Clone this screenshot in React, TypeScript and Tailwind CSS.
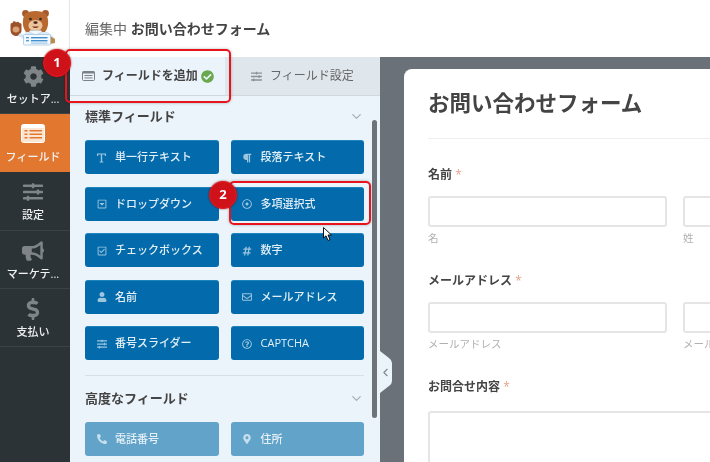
import React from 'react';
import { clsx } from 'clsx';
import {
  FaBullhorn,
  FaCheckCircle,
  FaCog,
  FaDollarSign,
  FaHashtag,
  FaMapMarkerAlt,
  FaParagraph,
  FaPhoneAlt,
  FaRegCaretSquareDown,
  FaRegCheckSquare,
  FaRegDotCircle,
  FaRegEnvelope,
  FaRegQuestionCircle,
  FaSlidersH,
  FaUser,
} from 'react-icons/fa';
import { LuChevronDown, LuChevronLeft } from 'react-icons/lu';

const FONT = { fontFamily: '"Open Sans", "Noto Sans CJK JP", sans-serif' };

function BearLogo() {
  return (
    <svg width="46" height="36" viewBox="0 0 46 36">
      {/* paw */}
      <path d="M0.5 15 Q0.5 12.5 2.5 13 L3 11.5 Q5 10.5 6 12.5 Q8 11 9.5 13 Q12 13 11.5 16 L11.5 21 Q10 26.5 5.5 26 Q0.5 25 0.5 20 Z" fill="#9c5228" />
      <ellipse cx="6" cy="19.5" rx="3.4" ry="3" fill="#dba077" />
      <path d="M10 23 L15 26 L14 29.5 L8 25.5 Z" fill="#d5e6f4" />
      {/* ears */}
      <circle cx="15.5" cy="3.5" r="3.4" fill="#a5592c" />
      <circle cx="35.5" cy="3.5" r="3.4" fill="#a5592c" />
      {/* head */}
      <path d="M15 4 C19 0 32 0 36 4 C39 9 39 17 35 22 L16 22 C12 17 12 9 15 4 Z" fill="#b9682f" />
      <ellipse cx="25.5" cy="15.5" rx="7" ry="5.5" fill="#ecc49b" />
      <circle cx="20.5" cy="9" r="1.3" fill="#2f2a28" />
      <circle cx="30.5" cy="9" r="1.3" fill="#2f2a28" />
      <ellipse cx="25.5" cy="12.6" rx="2.2" ry="1.4" fill="#4a2a1c" />
      <path d="M22 16.5 Q25.5 19.5 29 16.5 Z" fill="#7d2f20" />
      {/* shirt */}
      <path d="M15 22 L38 22 L44 27 L44 33 L39 34 L15 34 Z" fill="#dbeaf7" />
      <path d="M40 26 L45 29 L45 33 L40 34 Z" fill="#c08a4a" />
      <path d="M19 22 L25.5 25 L32 22 L31 20.5 L20 20.5 Z" fill="#f3f8fc" stroke="#a9c3da" strokeWidth="0.5" />
      {/* form */}
      <rect x="13.5" y="24.5" width="27" height="10.5" rx="1" fill="#f4f9fd" stroke="#9cc0de" strokeWidth="0.7" />
      <rect x="16" y="27" width="3" height="1.4" fill="#5b9fd8" />
      <rect x="21" y="27" width="16.5" height="1.4" fill="#3f8fd0" />
      <rect x="16" y="30" width="3" height="1.4" fill="#5b9fd8" />
      <rect x="21" y="30" width="16.5" height="1.4" fill="#3f8fd0" />
      <rect x="21" y="32.6" width="16.5" height="1" fill="#8dbde4" />
    </svg>
  );
}

function FormsIcon() {
  return (
    <svg width="24" height="19" viewBox="0 0 24 19">
      <rect x="0.5" y="0.5" width="23" height="18" rx="2" fill="#fbe6d4" stroke="#fff" />
      <rect x="1" y="1" width="22" height="3" fill="#fff" />
      <rect x="3.5" y="6" width="3" height="1.5" fill="#e27730" />
      <rect x="8.5" y="6" width="12.5" height="1.5" fill="#e27730" />
      <rect x="3.5" y="9.5" width="3" height="1.5" fill="#e27730" />
      <rect x="8.5" y="9.5" width="12.5" height="1.5" fill="#e27730" />
      <rect x="3.5" y="13" width="3" height="1.5" fill="#e27730" />
      <rect x="8.5" y="13" width="12.5" height="1.5" fill="#e27730" />
    </svg>
  );
}

function TabFormsIcon() {
  return (
    <svg width="13" height="10" viewBox="0 0 13 10">
      <rect x="0.5" y="0.5" width="12" height="9" rx="1" fill="none" stroke="#7a8288" />
      <rect x="0.5" y="0.5" width="12" height="2" fill="#7a8288" />
      <rect x="2.5" y="4" width="8" height="1" fill="#7a8288" />
      <rect x="2.5" y="6.4" width="8" height="1" fill="#7a8288" />
    </svg>
  );
}

function TextLineIcon() {
  return (
    <svg width="11" height="10" viewBox="0 0 11 10" fill="currentColor">
      <path d="M1 0.5 H10 V3 H9 L8.6 1.6 H6.2 V8.4 L7.4 8.8 V9.5 H3.6 V8.8 L4.8 8.4 V1.6 H2.4 L2 3 H1 Z" />
    </svg>
  );
}

function SideItem({
  icon,
  label,
  active,
  height,
}: {
  icon: React.ReactNode;
  label: string;
  active?: boolean;
  height: string;
}) {
  return (
    <div
      className={clsx(
        'flex flex-col items-center justify-center gap-[5px] border-b pr-[4px]',
        height,
        active ? 'border-[#e27730] bg-[#e27730] text-white' : 'border-[#3a4246] text-[#7f8487]'
      )}
    >
      <div className="flex h-[22px] items-center">{icon}</div>
      <span className="text-[11px] leading-[13px] font-medium whitespace-nowrap text-[#f0f1f1]">{label}</span>
    </div>
  );
}

function FieldButton({
  icon,
  label,
  disabled,
}: {
  icon: React.ReactNode;
  label: string;
  disabled?: boolean;
}) {
  return (
    <div
      className={clsx(
        'flex h-[34px] items-center gap-[8px] rounded-[3px] pl-[11px] text-[11px] font-medium',
        disabled
          ? 'bg-[#62a3ca] text-[#e4eff6]'
          : 'border-t border-[#1d84bd] bg-[#036aab] text-[#e3eff6]'
      )}
    >
      <span className={clsx('flex w-[11px] justify-center text-[10px]', disabled ? 'text-[#c6dfee]' : 'text-[#9cc5de]')}>
        {icon}
      </span>
      <span>{label}</span>
    </div>
  );
}

function SectionTitle({ label }: { label: string }) {
  return (
    <div className="flex items-center justify-between">
      <span className="text-[13px] leading-[18px] font-bold text-[#444]">{label}</span>
      <LuChevronDown className="text-[15px] text-[#a6b0b9]" />
    </div>
  );
}

function Field({
  label,
  subs,
  tall,
}: {
  label: string;
  subs?: string[];
  tall?: boolean;
}) {
  return (
    <div>
      <div className="text-[12px] leading-[16px] font-bold text-[#444]">
        {label} <span className="font-normal text-[#e3a48c]">*</span>
      </div>
      {tall ? (
        <div className="mt-[16px] h-[120px] w-[400px] rounded-[3px] border-2 border-[#e4e5e6]" />
      ) : (
        <div className="mt-[13px] grid w-[494px] grid-cols-2 gap-x-[16px]">
          {subs?.map((sub) => (
            <div key={sub}>
              <div className="h-[31px] rounded-[3px] border-2 border-[#e4e5e6]" />
              <div className="mt-[3px] truncate text-[10.5px] leading-[16px] text-[#b0b0b0]">{sub}</div>
            </div>
          ))}
        </div>
      )}
    </div>
  );
}

function Badge({ n, className }: { n: number; className: string }) {
  return (
    <div
      className={clsx(
        'absolute flex h-[28px] w-[28px] items-center justify-center rounded-full border border-[#e8181f] bg-[#cf1219] text-[13px] font-bold text-white shadow-[0_0_2px_rgba(120,0,0,0.8)]',
        className
      )}
    >
      {n}
    </div>
  );
}

export default function App() {
  return (
    <div className="relative flex h-[462px] w-[710px] flex-col overflow-hidden bg-white blur-[0.3px]" style={FONT}>
      <header className="flex h-[57px] shrink-0 items-center bg-white">
        <div className="flex h-full w-[70px] items-start border-r border-[#e6e6e6] pl-[10px] pt-[10px]">
          <BearLogo />
        </div>
        <div className="pl-[15px] text-[14px] text-[#666]">
          編集中 <span className="font-bold text-[#444]">お問い合わせフォーム</span>
        </div>
      </header>

      <div className="flex min-h-0 flex-1">
        <nav className="w-[70px] shrink-0 bg-[#2b3337]">
          <SideItem height="h-[57px]" label="セットア..." icon={<FaCog className="text-[21px]" />} />
          <SideItem height="h-[58px]" active label="フィールド" icon={<FormsIcon />} />
          <SideItem height="h-[59px]" label="設定" icon={<FaSlidersH className="text-[20px]" />} />
          <SideItem height="h-[58px]" label="マーケテ..." icon={<FaBullhorn className="text-[22px]" />} />
          <SideItem height="h-[58px]" label="支払い" icon={<FaDollarSign className="text-[22px]" />} />
        </nav>

        <aside className="flex w-[310px] shrink-0 flex-col bg-[#ebf3fb]">
          <div className="flex h-[39px] shrink-0 border-b border-[#cfd7df]">
            <div className="flex w-[155px] items-center gap-[7px] pl-[12px] text-[12px] font-bold text-[#444]">
              <TabFormsIcon />
              <span className="flex items-center gap-[3px]">
                フィールドを追加
                <FaCheckCircle className="text-[13px] text-[#6aa84f]" />
              </span>
            </div>
            <div className="flex flex-1 items-center gap-[8px] bg-[#dfe6ec] pl-[26px] text-[12px] text-[#666]">
              <FaSlidersH className="text-[11px] text-[#8a9197]" />
              <span>フィールド設定</span>
            </div>
          </div>

          <div className="relative flex-1 overflow-hidden pl-[15px] pr-[16px] pt-[11px]">
            <SectionTitle label="標準フィールド" />
            <div className="mt-[15px] grid grid-cols-2 gap-x-[12px] gap-y-[12.5px]">
              <FieldButton icon={<TextLineIcon />} label="単一行テキスト" />
              <FieldButton icon={<FaParagraph />} label="段落テキスト" />
              <FieldButton icon={<FaRegCaretSquareDown />} label="ドロップダウン" />
              <FieldButton icon={<FaRegDotCircle />} label="多項選択式" />
              <FieldButton icon={<FaRegCheckSquare />} label="チェックボックス" />
              <FieldButton icon={<FaHashtag />} label="数字" />
              <FieldButton icon={<FaUser />} label="名前" />
              <FieldButton icon={<FaRegEnvelope />} label="メールアドレス" />
              <FieldButton icon={<FaSlidersH />} label="番号スライダー" />
              <FieldButton icon={<FaRegQuestionCircle />} label="CAPTCHA" />
            </div>
            <div className="mt-[15px] border-t border-[#d8dfe6]" />
            <div className="mt-[13px]">
              <SectionTitle label="高度なフィールド" />
            </div>
            <div className="mt-[15px] grid grid-cols-2 gap-x-[12px]">
              <FieldButton disabled icon={<FaPhoneAlt />} label="電話番号" />
              <FieldButton disabled icon={<FaMapMarkerAlt />} label="住所" />
            </div>
            {/* scrollbar */}
            <div className="absolute left-[302px] top-[24px] h-[298px] w-[5px] rounded-full bg-[#6d7378]" />
          </div>
        </aside>

        <main className="min-w-0 flex-1 bg-[#6b7178] pl-[24px] pt-[12px]">
          <div className="h-[500px] rounded-tl-[8px] bg-white pl-[24px] pt-[19px]">
            <h1 className="text-[21.5px] leading-[30px] font-bold text-[#444]">お問い合わせフォーム</h1>
            <div className="mt-[20px] border-t border-[#eeeeee]" />
            <div className="mt-[28px] flex flex-col gap-[27px]">
              <Field label="名前" subs={['名', '姓']} />
              <Field label="メールアドレス" subs={['メールアドレス', 'メールアドレスの確認']} />
              <Field label="お問合せ内容" tall />
            </div>
          </div>
        </main>
      </div>

      {/* panel collapse handle */}
      <div className="absolute left-[380px] top-[351px] flex h-[42px] w-[12px] items-center">
        <svg className="absolute inset-0" width="12" height="42" viewBox="0 0 12 42">
          <path d="M0 0 L9 7 Q12 9 12 12 L12 30 Q12 33 9 35 L0 42 Z" fill="#ebf3fb" />
        </svg>
        <LuChevronLeft className="relative -ml-[1px] text-[13px] text-[#7f8890]" />
      </div>

      {/* tutorial annotations */}
      <div className="absolute left-[65px] top-[49px] h-[54px] w-[166px] rounded-[5px] border-2 border-[#e8141c] shadow-[0_0_3px_rgba(0,0,0,0.3)]" />
      <Badge n={1} className="left-[43px] top-[49px]" />
      <div className="absolute left-[229px] top-[181px] h-[44px] w-[142px] rounded-[5px] border-2 border-[#e8141c] shadow-[0_0_3px_rgba(0,0,0,0.3)]" />
      <Badge n={2} className="left-[209px] top-[181px]" />

      {/* mouse cursor */}
      <svg className="absolute left-[323px] top-[227px]" width="10" height="15" viewBox="0 0 10 15">
        <path d="M0.5 0.5 L0.5 11 L3 8.8 L5 13.5 L7 12.6 L5 8 L8.5 8 Z" fill="#fff" stroke="#111" strokeWidth="1" />
      </svg>
    </div>
  );
}
